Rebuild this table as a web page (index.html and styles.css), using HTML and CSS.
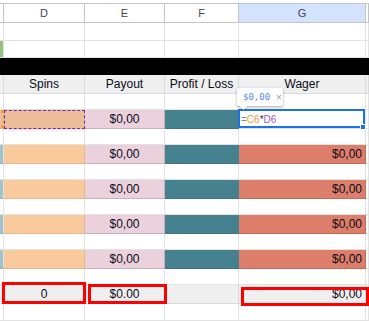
FILE: index.html
```html
<!DOCTYPE html>
<html>
<head>
<meta charset="utf-8">
<link rel="stylesheet" href="styles.css">
</head>
<body>
<div class="sheet">
  <div class="top"></div>

  <div class="c h"></div><div class="c h">D</div><div class="c h">E</div><div class="c h">F</div><div class="c h hsel">G</div><div class="c h"></div>

  <div class="c"></div><div class="c"></div><div class="c"></div><div class="c"></div><div class="c"></div><div class="c"></div>

  <div class="c green"></div><div class="c"></div><div class="c"></div><div class="c"></div><div class="c"></div><div class="c"></div>

  <div class="black"></div>

  <div class="c t"></div><div class="c t">Spins</div><div class="c t">Payout</div><div class="c t">Profit / Loss</div><div class="c t">Wager</div><div class="c t"></div>

  <div class="c"></div><div class="c"></div><div class="c"></div><div class="c"></div><div class="c"></div><div class="c"></div>
  <div class="c refc"><span class="sq sq1"></span><span class="sq sq2"></span></div><div class="c refd"></div><div class="c pink">$0,00</div><div class="c teal"></div><div class="c sel"><span class="eq">=</span><span class="rc">C6</span><span class="op">*</span><span class="rd">D6</span><span class="handle"></span></div><div class="c"></div>

  <div class="c"></div><div class="c"></div><div class="c"></div><div class="c"></div><div class="c"></div><div class="c"></div>
  <div class="c lb"></div><div class="c orange"></div><div class="c pink">$0,00</div><div class="c teal"></div><div class="c salmon">$0,00</div><div class="c"></div>

  <div class="c"></div><div class="c"></div><div class="c"></div><div class="c"></div><div class="c"></div><div class="c"></div>
  <div class="c lb"></div><div class="c orange"></div><div class="c pink">$0,00</div><div class="c teal"></div><div class="c salmon">$0,00</div><div class="c"></div>

  <div class="c"></div><div class="c"></div><div class="c"></div><div class="c"></div><div class="c"></div><div class="c"></div>
  <div class="c lb"></div><div class="c orange"></div><div class="c pink">$0,00</div><div class="c teal"></div><div class="c salmon">$0,00</div><div class="c"></div>

  <div class="c"></div><div class="c"></div><div class="c"></div><div class="c"></div><div class="c"></div><div class="c"></div>
  <div class="c lb"></div><div class="c orange"></div><div class="c pink">$0,00</div><div class="c teal"></div><div class="c salmon">$0,00</div><div class="c"></div>

  <div class="c"></div><div class="c"></div><div class="c"></div><div class="c"></div><div class="c"></div><div class="c"></div>
  <div class="c tot"></div><div class="c tot">0</div><div class="c tot">$0.00</div><div class="c tot"></div><div class="c tot right">$0,00</div><div class="c tot"></div>

  <div class="c"></div><div class="c"></div><div class="c"></div><div class="c"></div><div class="c"></div><div class="c"></div>

  <div class="tip"><span class="tipval">$0,00</span><span class="tipx">×</span></div>

  <div class="mark m1"></div>
  <div class="mark m2"></div>
  <div class="mark m3"></div>
</div>
</body>
</html>
```

FILE: styles.css
```css
html, body {
  margin: 0;
  padding: 0;
  background: #ffffff;
}

.sheet {
  position: relative;
  width: 369px;
  height: 321px;
  overflow: hidden;
  display: grid;
  grid-template-columns: 4px 81px 80px 74px 127px 1fr;
  grid-template-rows: 3px 20px 18px 17px 17px 19px repeat(6, 16px 19px) 17px;
  font-family: "Liberation Sans", Arial, sans-serif;
  color: #000;
}

.top {
  grid-column: 1 / -1;
  background: #ffffff;
}

.black {
  grid-column: 1 / -1;
  background: #000000;
}

.c {
  box-sizing: border-box;
  border-right: 1px solid #e2e2e2;
  border-bottom: 1px solid #e2e2e2;
  font-size: 12px;
  display: flex;
  align-items: center;
  justify-content: center;
  white-space: nowrap;
  overflow: hidden;
  position: relative;
}

.h {
  border-top: 1px solid #c4c4c4;
  border-bottom-color: #c4c4c4;
  border-right-color: #c4c4c4;
  font-size: 11px;
  color: #4a4450;
  background: #ffffff;
}

.hsel {
  background: #d3e3fd;
}

.green {
  background: #93c47d;
}

.t {
  background: #efefef;
  border-right-color: #dadada;
  border-bottom-color: #dadada;
  color: #0b0b1a;
}

.lb {
  background: #a2c4c9;
  border-bottom-color: #8fb3b8;
}

.orange {
  background: #f9cb9c;
  border-right-color: #e8b88a;
  border-bottom-color: #e6b589;
}

.pink {
  background: #ead1dc;
  border-right-color: #c9aebb;
  border-bottom-color: #c9aebb;
  color: #0b0b1a;
}

.teal {
  background: #45818e;
  border-right-color: #45818e;
  border-bottom-color: #3c7480;
}

.salmon {
  background: #dd7e6b;
  border-right-color: #c46a58;
  border-bottom-color: #c46a58;
  justify-content: flex-end;
  padding-right: 3px;
  color: #0b0b1a;
}

.refc {
  background: #eebf9a;
  border-right: 1px dashed #f29b34;
  border-bottom-color: #e6b589;
}

.sq {
  position: absolute;
  right: -1px;
  width: 3px;
  height: 3px;
  background: #f29b34;
}

.sq1 { top: 0; }
.sq2 { bottom: 0; }

.refd {
  background: #edbd99;
  border: 1px dashed #7427a0;
  box-shadow: 1px 1px 3px rgba(0, 0, 0, 0.15);
}

.sel {
  background: #ffffff;
  justify-content: flex-start;
  padding-left: 2px;
  font-size: 10px;
  overflow: visible;
  z-index: 2;
}

.sel::before {
  content: "";
  position: absolute;
  left: -1px;
  top: -1px;
  right: 0;
  bottom: 0;
  border: 2px solid #1a73e8;
  pointer-events: none;
}

.handle {
  position: absolute;
  right: -1px;
  bottom: -2px;
  width: 4px;
  height: 4px;
  background: #1a73e8;
  border: 1px solid #ffffff;
}

.eq { color: #8a8a8a; }
.rc { color: #f29b34; }
.op { color: #333333; }
.rd { color: #9b5cc0; }

.tot {
  background: #efefef;
  border-right-color: #dadada;
  border-bottom-color: #dadada;
  color: #0b0b1a;
}

.right {
  justify-content: flex-end;
  padding-right: 3px;
}

.tip {
  position: absolute;
  left: 237px;
  top: 88px;
  width: 46px;
  height: 18px;
  box-sizing: border-box;
  background: #ffffff;
  border-radius: 2px;
  box-shadow: 0 1px 3px rgba(0, 0, 0, 0.35);
  display: flex;
  align-items: center;
  padding-left: 6px;
  gap: 6px;
  z-index: 5;
}

.tip::after {
  content: "";
  position: absolute;
  left: 4px;
  bottom: -3px;
  width: 5px;
  height: 5px;
  background: #ffffff;
  transform: rotate(45deg);
  box-shadow: 1px 1px 1px rgba(0, 0, 0, 0.2);
}

.tipval {
  font-family: "DejaVu Sans Mono", "Liberation Mono", monospace;
  font-size: 9px;
  color: #5a8be0;
}

.tipx {
  font-family: "Liberation Sans", Arial, sans-serif;
  font-size: 10px;
  color: #a0a0a0;
}

.mark {
  position: absolute;
  box-sizing: border-box;
  border: 3px solid #ff0000;
  z-index: 6;
}

.m1 {
  left: 2px;
  top: 282px;
  width: 84px;
  height: 22px;
}

.m2 {
  left: 88px;
  top: 284px;
  width: 79px;
  height: 20px;
}

.m3 {
  left: 241px;
  top: 287px;
  width: 128px;
  height: 19px;
}
```
